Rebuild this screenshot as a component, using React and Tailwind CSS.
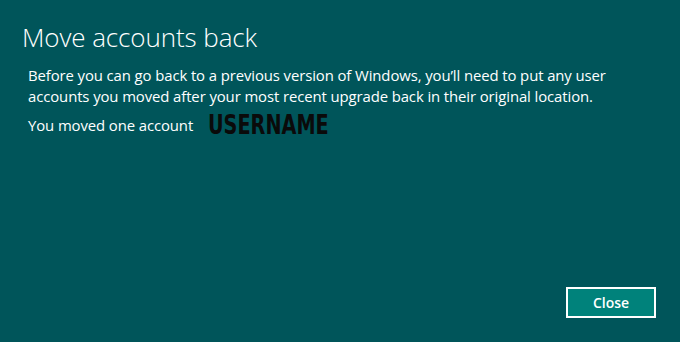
import React from 'react';

const App = () => (
  <div className="w-[680px] h-[342px] bg-[#00555a] text-white flex flex-col overflow-hidden" style={{ fontFamily: '"Open Sans", "Noto Sans", sans-serif' }}>
    <h1 className="ml-[22px] mt-[19px] text-[26px] leading-[36px] font-light tracking-[-0.1px]">Move accounts back</h1>
    <p className="ml-[28px] mt-[10px] w-[620px] text-[14.9px] leading-[21px] tracking-[-0.1px]">
      Before you can go back to a previous version of Windows, you’ll need to put any user<br />
      accounts you moved after your most recent upgrade back in their original location.
    </p>
    <div className="ml-[28px] mt-[6px] flex items-center h-[24px]">
      <span className="text-[14.9px] tracking-[-0.1px]">You moved one account</span>
      <span
        className="ml-[15px] inline-block origin-left scale-x-[0.74] text-[26px] font-bold text-[#0a0a0a] leading-none"
        style={{ fontFamily: '"DejaVu Sans", sans-serif' }}
      >
        USERNAME
      </span>
    </div>
    <div className="flex-1" />
    <div className="flex justify-end pr-[24px] pb-[24px]">
      <button className="w-[90px] h-[31px] border-2 border-white bg-[#00827b] text-[14px] font-semibold text-white">Close</button>
    </div>
  </div>
);

export default App;
